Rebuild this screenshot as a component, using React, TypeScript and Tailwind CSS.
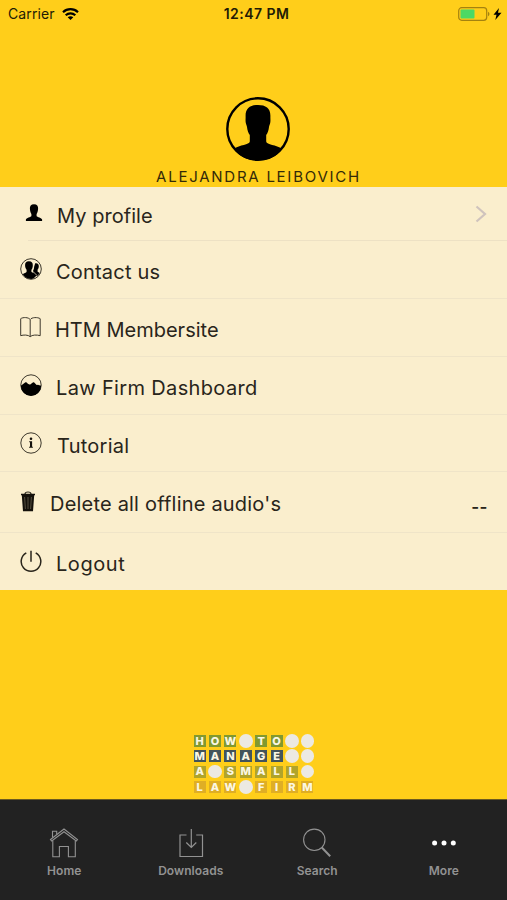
import type { ReactNode } from "react";

const ICON = "h-6 w-6 shrink-0 -mt-[2px]";

function ProfileIcon() {
  return (
    <svg className={ICON} viewBox="0 0 24 24">
      <path
        d="M14 3.200c3.100 0 4.300 1.800 4.100 4.500-.1 2.300-.7 4-1.500 5.200v2c.5 1.300 5.200 1.600 5.500 3.600v1.400H5.900v-1.400c.3-2 5-2.300 5.500-3.600v-2C10.600 11.700 10 10 9.900 7.700 9.700 5 10.900 3.200 14 3.200Z"
        fill="#000"
      />
    </svg>
  );
}

function ContactIcon() {
  return (
    <svg className={ICON} viewBox="0 0 24 24">
      <circle cx="11" cy="12" r="10.300" fill="none" stroke="#3d382c" />
      <path
        d="M15.200 6.300c2.500-.4 3.800 1 3.600 3.300-.1 1.500-.6 2.500-1.200 3.200v1.900l2.200 1.400-2.600 3.500-3.600-3.200-.6-2.400c.8-1.500 1.200-3 1.200-4.600Z"
        fill="#000"
      />
      <path
        d="M8.900 4.300c2.900 0 4.100 1.700 3.900 4.400-.1 1.900-.7 3.300-1.400 4.100v1.900c1 1.300 4.300 1.300 4.900 3.700-1.400 2.200-3.200 3.500-5.200 3.500-3.600 0-6.400-1.500-8.300-4.600 1.100-1 3.400-1.400 3.800-2.500v-2c-.8-.9-1.400-2.400-1.500-4.100-.2-2.700.9-4.400 3.800-4.400Z"
        fill="#000"
      />
      <path d="m12.800 14.300 4.300 4.300" stroke="#faeecd" strokeWidth=".7" />
    </svg>
  );
}

function BookIcon() {
  return (
    <svg className={ICON} viewBox="0 0 24 24" fill="none" stroke="#3d382c" strokeWidth="1">
      <path d="M10.200 4.500C8.500 2.200 3 2 .7 3.700v17c2.600-1 7.700-1 9.500 1 1.800-2 6.900-2 10-1v-17C17.700 2 11.700 2.200 10.200 4.500Zm0 0v17" />
    </svg>
  );
}

function DashboardIcon() {
  return (
    <svg className={ICON} viewBox="0 0 24 24">
      <circle cx="11" cy="12" r="10.200" fill="none" stroke="#3d382c" />
      <path
        d="m.8 12.800 4.300-3.300c1-.8 1.700 0 2.300.8.8 1.100 2.300 1.700 3.500.7 1-.8 2.300-2.500 3.300-1.500l2.200 2.200c.8.8 1.400 0 2 .2l2.800.9A10.200 10.200 0 0 1 .8 12.800Z"
        fill="#000"
      />
    </svg>
  );
}

function InfoIcon() {
  return (
    <svg className={ICON} viewBox="0 0 24 24">
      <circle cx="11" cy="12" r="10.200" fill="none" stroke="#3d382c" />
      <circle cx="11" cy="7.800" r="1.300" fill="#14110b" />
      <path d="M9.200 10.200h2.900v5.500h.8v1.100H9.100v-1.100h.9v-4.400h-.8Z" fill="#14110b" />
    </svg>
  );
}

function TrashIcon() {
  return (
    <svg className={ICON} viewBox="0 0 24 24">
      <path d="M5 4c0-2.700 6-2.700 6 0" fill="none" stroke="#29251b" strokeWidth="1.200" />
      <path d="M1 3.700h14v1.500h-.8L13 21.300H3L1.800 5.200H1Z" fill="#14110b" />
      <path d="m4.600 7 .8 12M8 7v12m3.400-12-.8 12" stroke="#706957" strokeWidth=".7" />
    </svg>
  );
}

function PowerIcon() {
  return (
    <svg className={ICON} viewBox="0 0 24 24" fill="none" stroke="#29251b" strokeWidth="1.500">
      <path d="M11 1.800v11M6.300 3.900a9.800 9.800 0 1 0 9.400 0" />
    </svg>
  );
}

type MenuItem = {
  label: string;
  icon: ReactNode;
  row: string;
  text: string;
  trailing?: ReactNode;
};

const items: MenuItem[] = [
  {
    label: "My profile",
    icon: <ProfileIcon />,
    row: "h-[54px]",
    text: "ml-[13px] mt-[4px] tracking-[0.050px]",
    trailing: (
      <svg className="mr-5 h-[18px] w-[12px]" viewBox="0 0 12 18" fill="none">
        <path d="m1.500 1.500 8.500 7.500-8.500 7.500" stroke="#cfc3bd" strokeWidth="2.200" />
      </svg>
    ),
  },
  { label: "Contact us", icon: <ContactIcon />, row: "h-[58px]", text: "ml-[12px] mt-[4px] tracking-[0.200px]" },
  { label: "HTM Membersite", icon: <BookIcon />, row: "h-[58px]", text: "ml-[11px] mt-[4px]" },
  { label: "Law Firm Dashboard", icon: <DashboardIcon />, row: "h-[58px]", text: "ml-[12px] mt-[4px] tracking-[0.350px]" },
  { label: "Tutorial", icon: <InfoIcon />, row: "h-[57px]", text: "ml-[13px] mt-[4px] tracking-[0.250px]" },
  {
    label: "Delete all offline audio's",
    icon: <TrashIcon />,
    row: "h-[61px]",
    text: "ml-[6px] mt-[3px] tracking-[0.200px]",
    trailing: <span className="mr-[19px] mt-[11px] text-[17px] font-semibold tracking-[0.500px]">--</span>,
  },
  { label: "Logout", icon: <PowerIcon />, row: "h-[57px]", text: "ml-[12px] mt-[4px] tracking-[0.550px]" },
];

function StatusBar() {
  return (
    <div className="grid h-[27px] grid-cols-3 items-center pl-2 pr-[5px] text-[14px] text-[#221b05]">
      <div className="flex items-center gap-[7px]">
        <span className="tracking-[0.100px]">Carrier</span>
        <svg className="h-3 w-[17px]" viewBox="0 0 17 12" fill="none" stroke="#000" strokeWidth="2.200">
          <path d="M1 4.200c4.200-4 10.800-4 15 0M3.700 7.200c2.700-2.500 6.900-2.500 9.600 0" />
          <path d="m5.700 9.200 2.800 2.800 2.800-2.800c-1.600-1.400-4-1.400-5.600 0Z" fill="#000" stroke="none" />
        </svg>
      </div>
      <span className="ml-[3px] text-center font-semibold tracking-[0.450px]">12:47 PM</span>
      <div className="flex items-center justify-end gap-[3px]">
        <svg className="h-[14px] w-8" viewBox="0 0 32 14">
          <rect x=".7" y=".7" width="28" height="12.600" rx="3" fill="none" stroke="#a5820f" strokeWidth="1.200" />
          <rect x="2.500" y="2.500" width="14" height="9" rx="1" fill="#4cd964" />
          <path d="M30 4.800c2 .8 2 3.600 0 4.400Z" fill="#a5820f" />
        </svg>
        <svg className="h-3 w-[9px]" viewBox="0 0 9 12">
          <path d="M6 0 .5 6.700h3L2.300 12l6.200-7.200H5Z" fill="#000" />
        </svg>
      </div>
    </div>
  );
}

function Avatar() {
  return (
    <svg className="h-16 w-16" viewBox="0 0 64 64">
      <circle cx="32" cy="32" r="30.700" fill="none" stroke="#000" strokeWidth="2.400" />
      <path
        d="M32 8c8 0 12.700 3.300 12.400 11.500-.1 2 .3 4-.2 6.500-.3 1.600-1 2.700-1.200 4-.4 3.500-1.300 6-2.800 8v6.500c.5 3.500 10 3 16 7.500C50 60.500 41 63.500 32 63.500S14 60.500 7.800 52c6-4.500 15.500-4 16-7.500V38c-1.500-2-2.400-4.500-2.800-8-.2-1.300-.9-2.400-1.200-4-.5-2.500-.1-4.500-.2-6.500C19.300 11.300 24 8 32 8Z"
        fill="#000"
      />
    </svg>
  );
}

const logoRows = [
  { text: "HOW TO  ", tile: "bg-[#81992f]" },
  { text: "MANAGE  ", tile: "bg-[#43545b]" },
  { text: "A SMALL ", tile: "bg-[#b0a42a]" },
  { text: "LAW FIRM", tile: "bg-[#dfae25]" },
];

function Logo() {
  return (
    <div className="flex flex-col gap-[3.400px]">
      {logoRows.map((row) => (
        <div key={row.text} className="flex h-3 items-center gap-[3.400px]">
          {row.text.split("").map((char, i) =>
            char === " " ? (
              <span key={i} className="-mx-[0.750px] h-[13.500px] w-[13.500px] shrink-0 rounded-full bg-[#ece9e2]" />
            ) : (
              <span
                key={i}
                className={`flex h-3 w-3 shrink-0 items-center justify-center text-[11px] font-extrabold text-[#fbf7e4] ${row.tile}`}
              >
                {char}
              </span>
            )
          )}
        </div>
      ))}
    </div>
  );
}

const TAB_ICON = "h-[30px] w-[30px]";

const tabs = [
  {
    label: "Home",
    icon: (
      <svg className={TAB_ICON} viewBox="0 0 30 30" fill="none" stroke="#929292" strokeWidth="1.100">
        <path d="M1.500 11.500 15 1l13.500 10.500-1.200 1.500L15 3.700 2.700 13Z" />
        <path d="M3.500 9.500V3.300h4.200v3M3.800 12.500v16.300h6.600V18.500h9v10.300h6.900V12.500" />
      </svg>
    ),
  },
  {
    label: "Downloads",
    icon: (
      <svg className={TAB_ICON} viewBox="0 0 30 30" fill="none" stroke="#929292" strokeWidth="1.200">
        <path d="M10.500 7H4v21.500h22.500V7h-6.300M15.300 1v18.500m-5-5 5 5 5-5" />
      </svg>
    ),
  },
  {
    label: "Search",
    icon: (
      <svg className={TAB_ICON} viewBox="0 0 30 30" fill="none" stroke="#929292">
        <circle cx="12.300" cy="11.800" r="10.700" strokeWidth="1.100" />
        <path d="m19.800 19.500 8.400 8.700" strokeWidth="2" />
      </svg>
    ),
  },
  {
    label: "More",
    icon: (
      <svg className={TAB_ICON} viewBox="0 0 30 30" fill="#fff">
        <circle cx="5.600" cy="15" r="2.500" />
        <circle cx="15" cy="15" r="2.500" />
        <circle cx="24.300" cy="15" r="2.500" />
      </svg>
    ),
  },
];

export default function App() {
  return (
    <div className="flex h-[900px] w-full flex-col overflow-hidden bg-[#ffce1a] font-['Inter',sans-serif]">
      <StatusBar />

      <header className="flex h-40 flex-col items-center pt-[70px]">
        <div className="ml-[9px]">
          <Avatar />
        </div>
        <h1 className="ml-[10px] mt-[7px] whitespace-nowrap text-[15px] leading-[18px] tracking-[1.750px] text-[#342a08]">
          ALEJANDRA LEIBOVICH
        </h1>
      </header>

      <ul className="bg-[#faeecd] text-[#29251b]">
        {items.map((item, i) => (
          <li key={item.label}>
            <div className={`flex items-center pl-5 ${item.row}`}>
              {item.icon}
              <span className={`grow whitespace-nowrap text-[20px] leading-6 ${item.text}`}>
                {item.label}
              </span>
              {item.trailing}
            </div>
            {i < items.length - 1 && (
              <div className={i === 0 ? "-mt-px ml-7 h-px bg-[#ede1c4]" : "-mt-px h-px bg-[#efe4c8]"} />
            )}
          </li>
        ))}
      </ul>

      <div className="flex grow items-end justify-center pb-[6px]">
        <Logo />
      </div>

      <nav className="grid h-[101px] shrink-0 grid-cols-4 border-t border-[#6b5a20] bg-[#222222] pl-px pt-7">
        {tabs.map((tab) => (
          <div key={tab.label} className="flex flex-col items-center">
            {tab.icon}
            <span className="mt-[5px] text-[12px] font-semibold leading-4 tracking-[0.050px] text-[#929292]">
              {tab.label}
            </span>
          </div>
        ))}
      </nav>
    </div>
  );
}
